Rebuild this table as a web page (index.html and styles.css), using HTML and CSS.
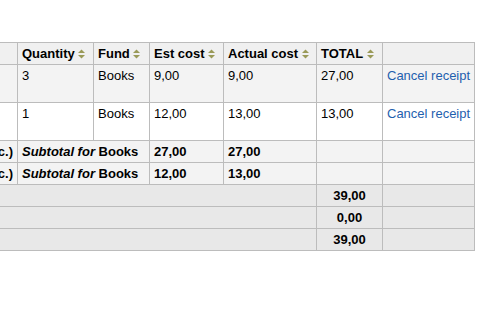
FILE: index.html
```html
<!DOCTYPE html>
<html>
<head>
<meta charset="utf-8">
<link rel="stylesheet" href="styles.css">
</head>
<body>
<div class="scroller">
<table class="receipts">
  <thead>
    <tr>
      <th class="lead"></th>
      <th class="w-qty">Quantity <svg class="sort" width="7" height="10" viewBox="0 0 7 10"><path d="M3.5 0.5L7 4H0z"/><path d="M0 6H7L3.5 9.5z"/></svg></th>
      <th class="w-fund">Fund <svg class="sort" width="7" height="10" viewBox="0 0 7 10"><path d="M3.5 0.5L7 4H0z"/><path d="M0 6H7L3.5 9.5z"/></svg></th>
      <th class="w-est">Est cost <svg class="sort" width="7" height="10" viewBox="0 0 7 10"><path d="M3.5 0.5L7 4H0z"/><path d="M0 6H7L3.5 9.5z"/></svg></th>
      <th class="w-act">Actual cost <svg class="sort" width="7" height="10" viewBox="0 0 7 10"><path d="M3.5 0.5L7 4H0z"/><path d="M0 6H7L3.5 9.5z"/></svg></th>
      <th class="w-tot">TOTAL <svg class="sort" width="7" height="10" viewBox="0 0 7 10"><path d="M3.5 0.5L7 4H0z"/><path d="M0 6H7L3.5 9.5z"/></svg></th>
      <th class="w-act2"></th>
    </tr>
  </thead>
  <tbody>
    <tr class="item highlight">
      <td class="lead"></td>
      <td>3</td>
      <td>Books</td>
      <td>9,00</td>
      <td>9,00</td>
      <td>27,00</td>
      <td><a href="#">Cancel receipt</a></td>
    </tr>
    <tr class="item">
      <td class="lead"></td>
      <td>1</td>
      <td>Books</td>
      <td>12,00</td>
      <td>13,00</td>
      <td>13,00</td>
      <td><a href="#">Cancel receipt</a></td>
    </tr>
  </tbody>
  <tfoot>
    <tr class="subtotal">
      <td class="label">(tax exc.)</td>
      <td colspan="2"><i>Subtotal for</i> Books</td>
      <td>27,00</td>
      <td>27,00</td>
      <td></td>
      <td></td>
    </tr>
    <tr class="subtotal">
      <td class="label">(tax exc.)</td>
      <td colspan="2"><i>Subtotal for</i> Books</td>
      <td>12,00</td>
      <td>13,00</td>
      <td></td>
      <td></td>
    </tr>
    <tr class="grand">
      <td colspan="5"></td>
      <td class="num">39,00</td>
      <td></td>
    </tr>
    <tr class="grand">
      <td colspan="5"></td>
      <td class="num">0,00</td>
      <td></td>
    </tr>
    <tr class="grand">
      <td colspan="5"></td>
      <td class="num">39,00</td>
      <td></td>
    </tr>
  </tfoot>
</table>
</div>
</body>
</html>
```

FILE: styles.css
```css
html, body {
  margin: 0;
  padding: 0;
  background: #ffffff;
}

body {
  font-family: "Liberation Sans", Arial, sans-serif;
  font-size: 13px;
  line-height: 15px;
  color: #000000;
}

.scroller {
  width: 482px;
  height: 312px;
  overflow: hidden;
  padding-top: 42px;
  box-sizing: border-box;
}

.receipts {
  border-collapse: collapse;
  margin-left: -192px;
}

.receipts th,
.receipts td {
  border: 1px solid #bcbcbc;
  padding: 3px 4px;
  vertical-align: top;
  text-align: left;
  white-space: nowrap;
}

.receipts th {
  background: #f0f0f0;
  font-weight: bold;
}

.receipts .lead {
  width: 200px;
}

.w-qty { width: 67px; }
.w-fund { width: 47px; }
.w-est { width: 65px; }
.w-act { width: 84px; }
.w-tot { width: 57px; }
.w-act2 { width: 83px; }

.sort {
  fill: #9a9a58;
  vertical-align: -1px;
}

.item td {
  height: 31px;
  background: #ffffff;
}

.item.highlight td {
  background: #f3f3f3;
}

.receipts a {
  color: #1f5fae;
  text-decoration: none;
}

.subtotal td {
  background: #f3f3f3;
  font-weight: bold;
}

.subtotal .label {
  text-align: right;
}

.grand td {
  background: #e8e8e8;
  font-weight: bold;
}

.grand .num {
  text-align: center;
}
```
